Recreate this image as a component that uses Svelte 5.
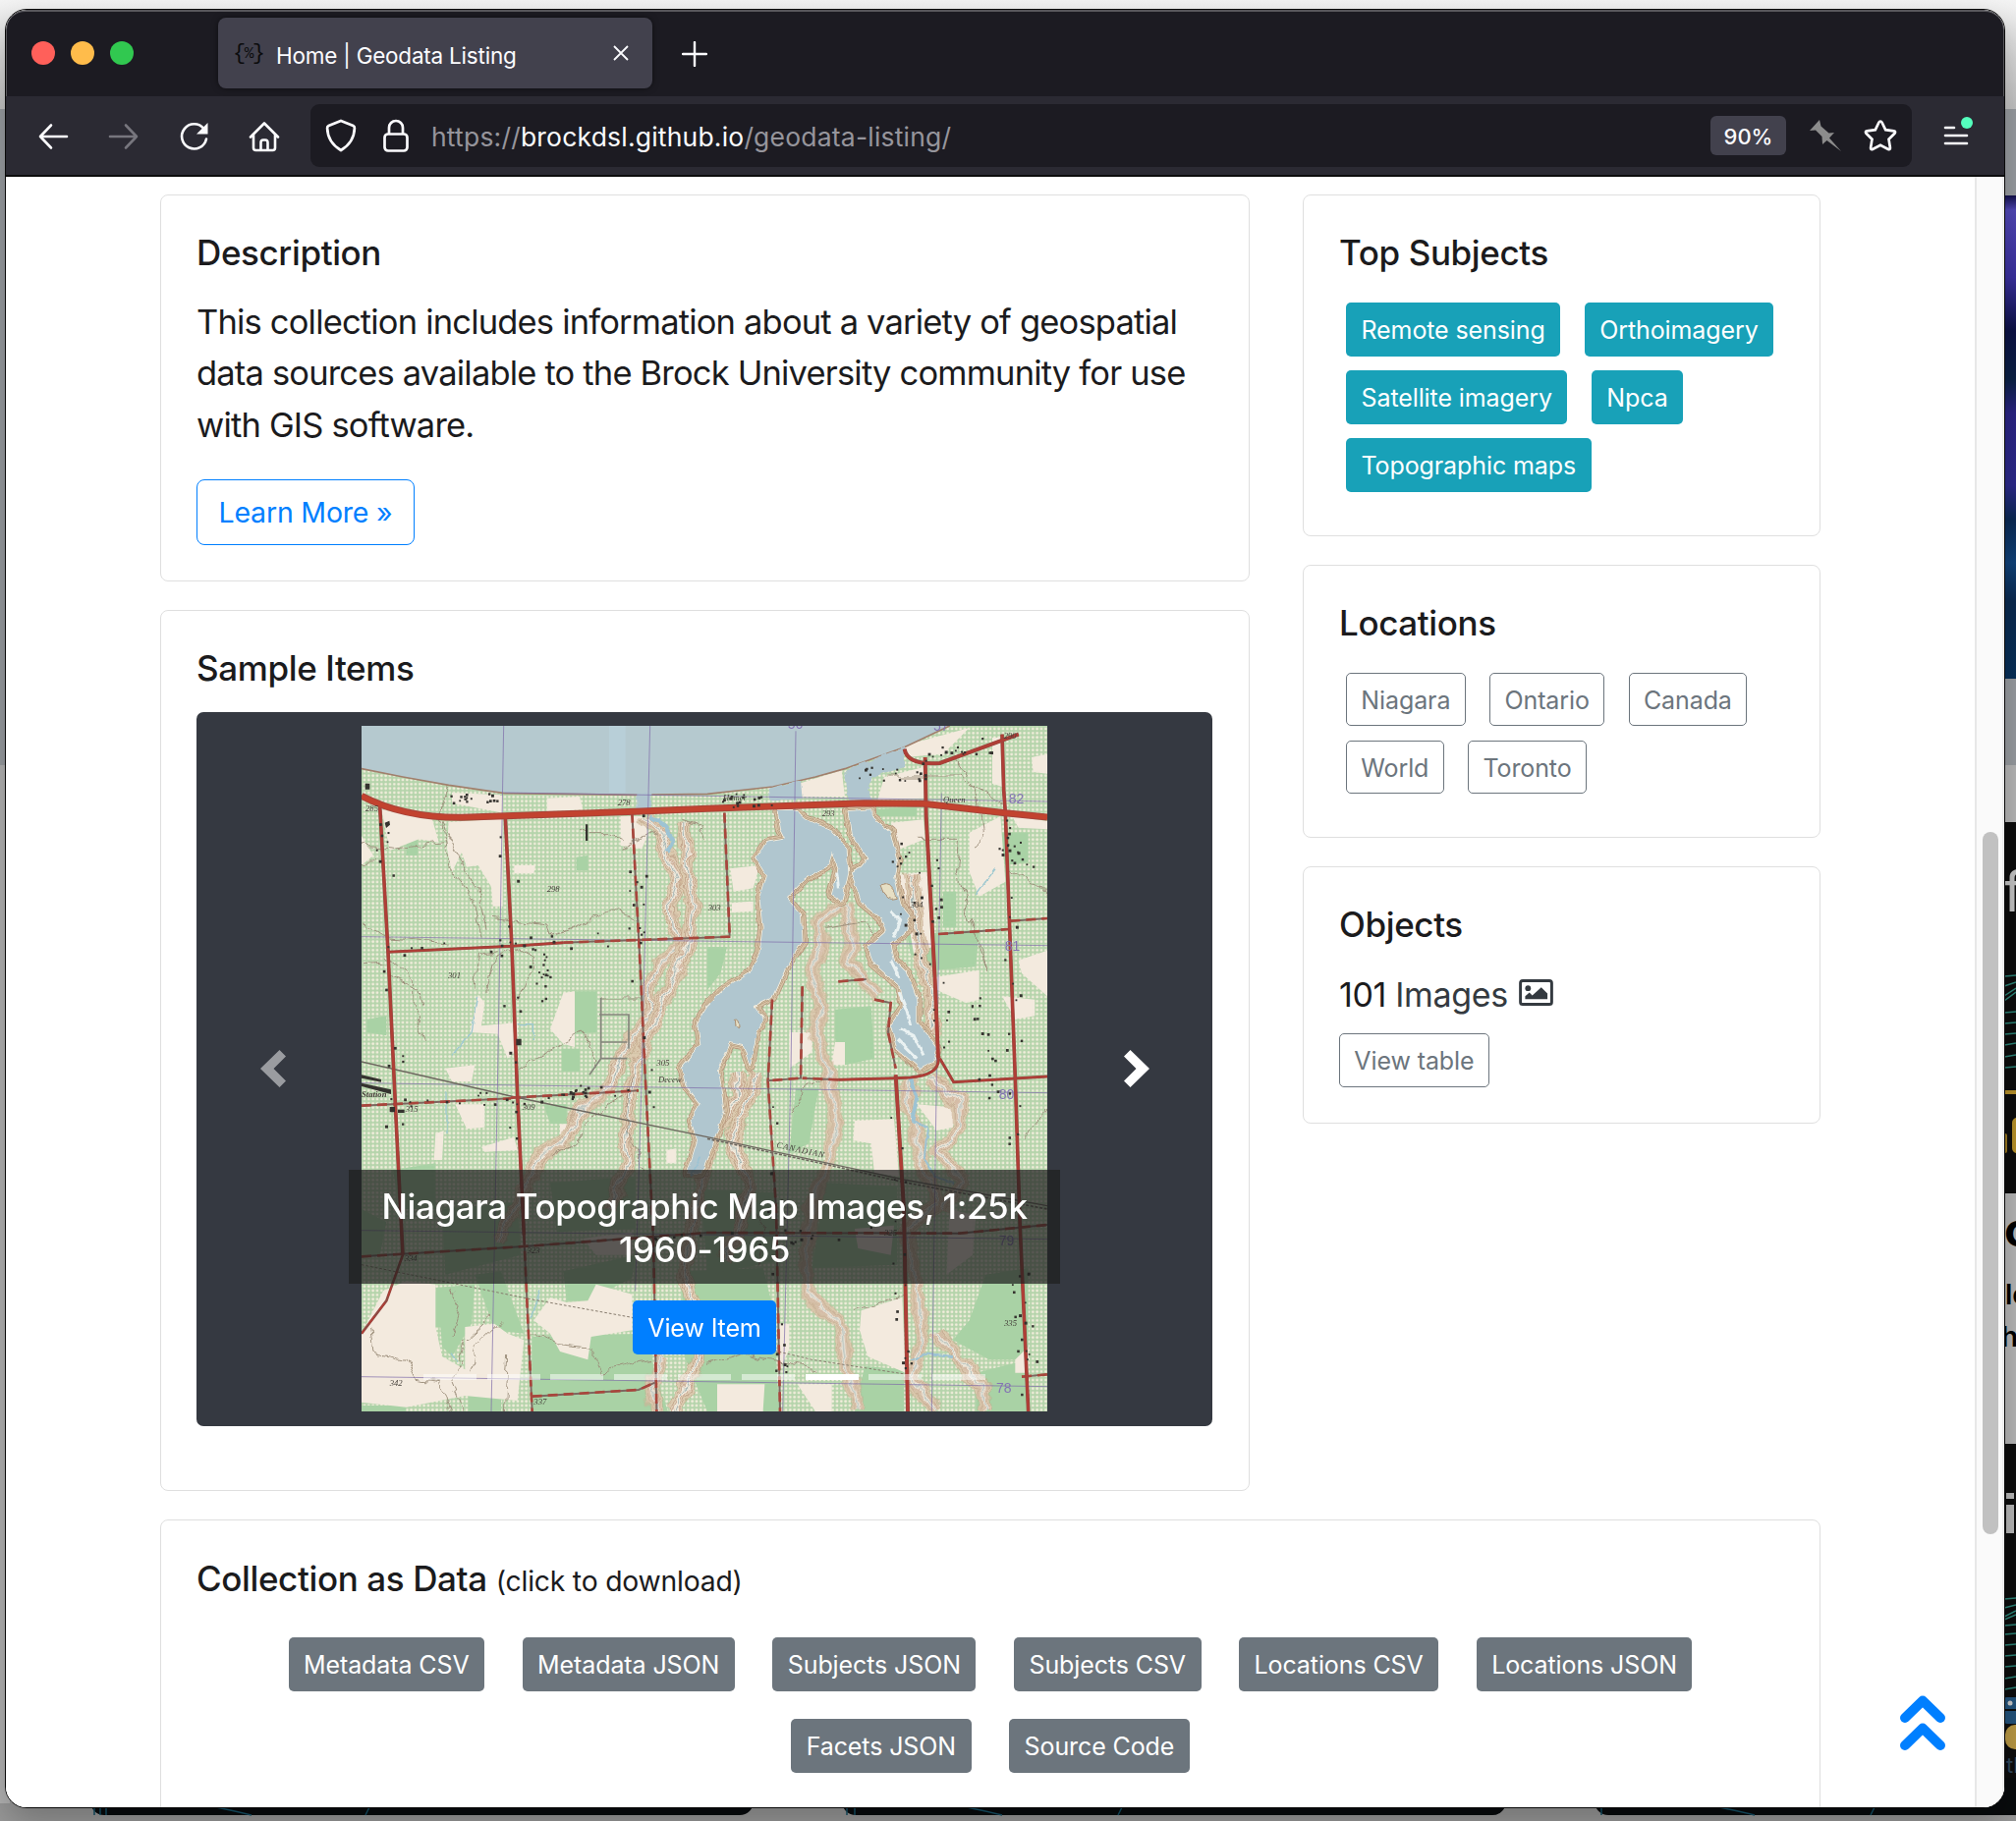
<script>
  const subjects = ['Remote sensing', 'Orthoimagery', 'Satellite imagery', 'Npca', 'Topographic maps'];
  const locations = ['Niagara', 'Ontario', 'Canada', 'World', 'Toronto'];
  const downloads = [
    'Metadata CSV', 'Metadata JSON', 'Subjects JSON', 'Subjects CSV',
    'Locations CSV', 'Locations JSON', 'Facets JSON', 'Source Code'
  ];
  const slides = [0, 1, 2, 3, 4, 5, 6, 7, 8];
  const activeSlide = 6;

  // Roads of the topographic sheet, drawn in map units (3 per pixel).
  const roads = [
    { d: 'M80 270 L105 715 L130 1240 L150 1640', w: 11 },
    { d: 'M463 305 L483 700 L500 1150 L520 1580', w: 11 },
    { d: 'M105 715 L483 697 L640 686', w: 9 },
    { d: 'M150 1640 L100 1780 L24 1880', w: 8, dash: '30 22' },
    { d: 'M1745 120 L1748 300 L1775 800 L1785 1040', w: 12 },
    { d: 'M1655 1090 L1680 1500 L1692 2118', w: 12 },
    { d: 'M1790 1040 L1832 1112 L2118 1095', w: 9 },
    { d: 'M1785 1040 Q1790 1090 1700 1098 L1655 1100 L1480 1105', w: 9 },
    { d: 'M1980 50 L1985 220 L1990 290 L2020 1100 L2035 1560 L2060 2118', w: 11 },
    { d: 'M1682 95 Q1690 145 1790 138 L2030 50', w: 12 }
  ];
  const brokenRoads = [
    'M640 686 L870 678 L1150 668', 'M850 290 L875 760 L890 1090 L915 1590 L925 2118',
    'M520 1580 L530 1800 L545 2118', 'M24 1184 L480 1162', 'M480 1160 L870 1138',
    'M24 1645 L520 1614 L1080 1572 L1850 1574 L2118 1548', 'M545 2072 L870 2052 L920 2030',
    'M1132 290 L1148 665', 'M1785 660 L2000 645', 'M2005 620 L2118 612',
    'M1278 860 L1265 1110 L1290 1500 L1302 2118', 'M1370 820 L1365 1100 L1265 1108',
    'M1480 1105 L1370 1100', 'M1480 805 L1565 798', 'M2040 2012 L2118 2005', 'M1590 860 L1640 870 L1632 960 L1655 1070'
  ];

  const creeks = [
    'M895 300 L935 350 L960 430 L990 500 L970 560 L975 640 L1010 700 L930 755 L900 830 L905 900 L860 970 L810 1040 L790 1120 L700 1190 L640 1290 L570 1340 L540 1400 L440 1600',
    'M1010 320 L1015 400 L1020 490 L1035 570 L1020 680 L1000 750 L960 830 L900 970 L860 1060 L850 1150 L830 1280 L840 1360 L780 1500',
    'M1480 570 L1420 620 L1430 700 L1400 790 L1430 880 L1410 960 L1440 1060 L1470 1200 L1460 1340 L1400 1480 L1380 1650 L1390 1760 L1490 1860 L1500 1960 L1540 2118',
    'M1500 570 L1520 640 L1510 740 L1560 800 L1600 850',
    'M1230 1085 L1200 1180 L1160 1260 L1170 1330 L1210 1430 L1180 1560 L1130 1650',
    'M1170 1085 L1175 1160 L1100 1260 L1070 1400 L1030 1560 L1010 1700 L1060 1850 L1050 1960 L980 2118',
    'M940 1950 L910 2040 L925 2118',
    'M1700 1100 L1690 1180 L1720 1270 L1740 1380 L1790 1480 L1690 1560 L1720 1750 L1740 1900 L1700 2010 L1780 2118',
    'M1760 1100 L1850 1170 L1850 1260 L1780 1320 L1860 1420 L1800 1500',
    'M1700 480 L1720 640 L1740 760 L1760 850 L1770 960',
    'M1780 1880 L1850 1960 L1920 2040 L1930 2118'
  ];

  const thinLines = [
    'M24 620 L90 670 L290 690', 'M420 610 L590 630 L600 660 L660 640 L780 590 L880 620', 'M105 730 L180 790 L185 900 L220 990',
    'M365 830 L380 720 L440 710', 'M410 830 L430 730 L490 700', 'M490 700 L555 740 L525 800 L500 870',
    'M110 790 L200 830 L210 880', 'M290 205 L260 300 L320 420 L380 520 L405 650', 'M270 330 L300 460 L365 550 L390 670',
    'M690 350 L780 350 L830 380', 'M820 400 L920 350', 'M1080 370 L1060 330 L1000 310', 'M1720 370 L1850 370 L1840 480 L1880 600 L1930 770 L1900 700',
    'M1840 130 L1900 220 L1920 360 L1900 400', 'M2000 470 L2080 500 L2118 545', 'M755 855 L870 855',
    'M50 1860 L60 1940 L160 1960 L190 2020 L260 2030 L290 2118', 'M550 1880 L620 1910 L720 1920 L760 2000 L900 1960', 'M300 1740 L330 1790 L300 1890',
    'M1080 1975 L1200 1940 L1420 1990', 'M1530 1805 L1680 1765', 'M24 390 L130 400 L270 380', 'M24 440 L90 435 M24 755 L100 750',
    'M500 1070 L700 960 L750 1060', 'M470 1940 L460 2118', 'M1630 180 L1850 180 L1990 260', 'M2050 1280 L2118 1200',
    'M850 1090 L830 1250 L890 1380', 'M330 1960 L300 2020 L340 2118 M420 1830 L340 1900 L320 1960 M450 1840 L370 1920 L350 2000',
    'M600 1340 L680 1290 L740 1200 L830 1150', 'M1340 1200 L1380 1120 L1440 1100', 'M1450 640 L1560 620 L1610 680', 'M1200 1480 L1260 1560 L1240 1680'
  ];

  const solidGreens = [
    '675,835 742,835 742,960 675,965', '160,340 195,330 195,420 160,420', '680,425 715,420 715,465 680,465', '40,920 100,910 100,970 40,960',
    '635,1010 690,1010 690,1080 635,1080', '1470,890 1580,880 1590,1040 1500,1060 1470,980', '1690,660 1910,650 1900,760 1770,770 1700,720',
    '1080,700 1140,700 1120,780 1080,830', '250,1740 370,1730 360,1850 300,1950 270,1920 265,1860 245,1860', '24,1500 100,1540 80,1640 24,1640',
    '270,1500 500,1480 510,1640 280,1700', '545,1890 900,1880 920,2010 960,2118 545,2118', '640,1690 860,1640 850,1710 715,1780 650,1780',
    '370,1700 450,1690 520,1880 430,1870', '1000,1690 1250,1680 1280,1800 1300,2118 1080,2118 1010,1950', '1060,1440 1290,1450 1290,1660 1080,1700',
    '1440,1420 1660,1430 1660,1670 1400,1680', '1930,1700 2060,1680 2060,1960 1940,1960 1830,1900 1880,1840', '1350,1130 1420,1130 1390,1300 1330,1330',
    '1560,1980 1680,1990 1680,2118 1530,2118', '1900,2000 2060,1960 2060,2118 1900,2118', '24,2100 160,2100 160,2118 24,2118',
    '1960,350 2060,350 2060,440 1990,450', '1800,530 1840,530 1840,640 1800,640', '350,2060 450,2060 450,2118 350,2118', '580,1180 650,1180 650,1240 600,1240',
    '1590,280 1720,270 1720,300 1600,300', '120,1380 250,1360 250,1500 140,1500', '600,1420 860,1400 860,1560 620,1570'
  ];

  const fields = [
    '290,318 455,308 455,575 425,575 420,515 380,450 345,455 330,410 300,470 285,400', '85,280 240,310 260,380 200,370 110,405',
    '640,840 675,835 675,1005 640,995 600,950', '355,960 380,845 400,870 390,940 500,930 500,1010 470,1040 440,965', '300,228 455,235 455,290 300,260',
    '590,245 690,240 700,280 590,285', '815,300 880,300 900,350 880,400 815,390', '490,450 555,450 550,475 490,475', '24,450 60,420 24,360',
    '24,1880 90,1750 160,1720 250,1730 250,1860 270,1950 340,1990 340,1860 430,1850 470,1880 520,1900 500,2085 340,2070 160,2105 24,2090',
    '550,1840 600,1770 650,1785 715,1780 740,1730 850,1760 850,1870 725,1890 715,1960 630,1935 600,1880', '1550,1810 1675,1770 1685,2000 1570,1950 1545,1870',
    '1110,2035 1255,2035 1250,2118 1110,2118', '1355,2035 1460,2035 1460,2118 1410,2118', '1530,1230 1650,1225 1665,1400 1590,1390 1580,1300 1525,1290',
    '310,1180 400,1180 400,1250 345,1255', '390,1310 490,1280 500,1320 400,1325', '250,1270 275,1260 270,1350 245,1350', '1640,320 1740,310 1745,370 1670,400',
    '1650,480 1750,470 1765,700 1710,720 1690,600', '1150,460 1240,450 1220,520 1160,530', '1155,565 1220,560 1220,590 1155,595', '1720,800 1910,770 1910,860 1870,870 1800,840',
    '2070,120 2118,110 2118,170 2075,165', '1880,350 1975,300 1990,500 1910,545 1880,470', '2010,300 2118,315 2118,340 2030,335', '1470,990 1500,990 1500,1060 1460,1060',
    '2030,740 2118,710 2118,850 2040,780', '1330,960 1400,960 1400,1020 1330,1070', '1950,60 1975,60 1980,210 1950,200', '1820,1500 1900,1520 1890,1640 1810,1700',
    '1360,200 1490,160 1500,240 1370,240', '1530,1560 1650,1550 1640,1640 1540,1620', '700,1590 850,1570 850,1640 740,1640', '1720,1180 1840,1190 1830,1250 1780,1260', '2020,1960 2060,1920 2060,2000 2020,2000',
    '1980,850 2080,860 2080,910 2020,920', '630,1240 660,1240 660,1290 630,1290', '955,1320 985,1315 985,1360 955,1360', '1300,1990 1330,1930 1330,1850 1300,1850',
    '1660,90 1880,30 1800,110 1740,115 1690,120', '1660,170 1740,150 1745,245 1600,250 1620,180', '280,1070 370,1060 360,1110 300,1110'
  ];

  // Small buildings scattered along the roads, from a fixed seed.
  function buildings() {
    let seed = 41;
    const next = () => ((seed = (seed * 16807) % 2147483647) / 2147483647);
    const lanes = [
      [85, 300, 130, 1300], [465, 320, 500, 1300], [853, 310, 900, 1350], [1750, 400, 1790, 1000], [1985, 300, 2030, 1300],
      [110, 705, 870, 670], [110, 1175, 870, 1140], [300, 250, 450, 250], [1100, 248, 1250, 248], [1640, 300, 1740, 780],
      [900, 1600, 1600, 1570], [1660, 1150, 1690, 2050], [2040, 1700, 2060, 2050], [1290, 1150, 1300, 2000], [1980, 350, 2060, 470],
      [1560, 160, 1750, 180], [1900, 780, 1950, 1180], [560, 700, 580, 900], [640, 1150, 740, 1130], [1700, 120, 1950, 80]
    ];
    const out = [];
    for (const [x1, y1, x2, y2] of lanes) {
      for (let i = 0; i < 17; i++) {
        const t = next();
        out.push({ x: x1 + (x2 - x1) * t + (next() - 0.5) * 64, y: y1 + (y2 - y1) * t + (next() - 0.5) * 44, s: 5 + next() * 4 });
      }
    }
    return out;
  }
  const dots = buildings();

  const labels = [
    [36, 286, '285'], [590, 530, '298'], [288, 795, '301'], [925, 1062, '305'], [1430, 300, '293'], [1082, 588, '303'], [1700, 580, '304'],
    [158, 1202, '315'], [515, 1196, '309'], [530, 1634, '323'], [155, 1658, '334'], [110, 2040, '342'], [550, 2096, '337'], [1986, 1858, '335'],
    [1985, 62, '290'], [806, 268, '278'], [1800, 258, 'Queen'], [1128, 252, 'Homer'], [930, 1114, 'Decew'], [1620, 1580, '325']
  ];
  const gridLabels = [[1325, 34, '56'], [1770, 38, '57'], [2000, 262, '82'], [1988, 712, '81'], [1970, 1164, '80'], [1970, 1610, '79'], [1962, 2060, '78']];
</script>

<div class="desktop">
  <svg class="backdrop" viewBox="0 0 2052 1854" aria-hidden="true">
    <defs>
      <linearGradient id="sky" x1="0" x2="0" y1="0" y2="1">
        <stop offset="0" stop-color="#f4f4f4" /><stop offset="1" stop-color="#c4c4c4" />
      </linearGradient>
      <linearGradient id="aurora" x1="0" x2="0" y1="0" y2="1">
        <stop offset="0" stop-color="#12104a" /><stop offset=".03" stop-color="#5148b8" /><stop offset=".17" stop-color="#3a30a0" />
        <stop offset=".28" stop-color="#0c1145" /><stop offset=".38" stop-color="#0b2145" /><stop offset=".45" stop-color="#2a2485" />
        <stop offset=".6" stop-color="#2c2a8c" /><stop offset=".67" stop-color="#0b2a55" /><stop offset=".76" stop-color="#10427a" />
        <stop offset=".84" stop-color="#0a2a50" /><stop offset="1" stop-color="#073059" />
      </linearGradient>
    </defs>
    <rect width="2052" height="1854" fill="#9a9a9a" />
    <rect width="2052" height="111" fill="url(#sky)" />
    <rect y="111" width="2052" height="668" fill="#999da1" />
    <rect x="0" y="779" width="10" height="1075" fill="#b4b4b4" />
    <rect x="2036" y="199" width="16" height="492" fill="url(#aurora)" />
    <rect x="2036" y="779" width="16" height="58" fill="#b8b8b8" />
    <rect x="2036" y="837" width="16" height="378" fill="#0d0d0d" />
    <g stroke="#2c8578" stroke-width="1.5">
      <path d="M2040 994l12-1M2040 1004l12-4M2040 1014l12-8M2040 1019l12-9M2040 1031l12-1M2040 1042l12-1M2040 1053l12-1M2040 1064l12-2M2040 1076l12-2M2040 1087l12-1" />
    </g>
    <rect x="2036" y="1110" width="16" height="4" fill="#b8922b" />
    <rect x="2038" y="1154" width="5" height="20" rx="2" fill="#9a7820" />
    <rect x="2048" y="1138" width="12" height="36" rx="5" fill="#b8922b" />
    <rect x="2036" y="1215" width="16" height="255" fill="#b8b8b8" />
    <rect x="2036" y="1470" width="16" height="378" fill="#0d0d0d" />
    <rect x="2042" y="1520" width="8" height="6" fill="#b9b9b9" />
    <rect x="2042" y="1532" width="8" height="29" fill="#b9b9b9" />
    <path d="M2040 1628l12-1M2040 1637l12-3M2040 1646l12-6M2040 1649l12-5M2040 1655l12-1M2040 1664l12-1M2040 1675l12-1M2040 1686l12-1M2040 1697l12-1M2040 1709l12-2M2040 1720l12-2" stroke="#2c8578" stroke-width="1.5" />
    <rect x="2038" y="1728" width="24" height="27" rx="5" fill="#23537c" />
    <rect x="2038" y="1740" width="14" height="2" fill="#0d0d0d" />
    <circle cx="2046" cy="1734" r="2.5" fill="#ccc" />
    <rect x="2041" y="1756" width="24" height="25" rx="10" fill="#bb9a45" />
    <rect x="0" y="1836" width="2052" height="18" fill="#9a9a9a" />
    <g fill="#080b0d">
      <rect x="92" y="1810" width="675" height="38" rx="14" />
      <rect x="857" y="1810" width="676" height="38" rx="14" />
      <rect x="1623" y="1810" width="450" height="38" rx="14" />
    </g>
    <path d="M96 1840v8M102 1840v8M108 1840v8M220 1840q20 4 36 8M376 1840l-4 8M862 1840v8M870 1840v8M984 1840q20 4 36 8M1142 1840l-4 8M1630 1840v8M1750 1840q20 4 36 8M1908 1840l-4 8" stroke="#155066" stroke-width="1.5" fill="none" />
    <g class="peek">
      <text x="2039" y="928" fill="#c4c4c4" font-size="56">f</text>
      <text x="2040" y="1269" fill="#000" font-size="48" font-weight="700">c</text>
      <text x="2041" y="1328" fill="#000" font-size="28" font-weight="600">lo</text>
      <text x="2037" y="1371" fill="#000" font-size="28" font-weight="600">h</text>
      <text x="2042" y="1805" fill="#30475c" font-size="22">th</text>
    </g>
  </svg>

  <div class="window">
    <div class="tabbar">
      <div class="lights"><i class="red"></i><i class="amber"></i><i class="green"></i></div>
      <div class="tab">
        <span class="favicon">&#123;<em>%</em>&#125;</span>
        <span class="tab-title">Home | Geodata Listing</span>
        <svg class="close" viewBox="0 0 16 16"><path d="M1 1l14 14M15 1L1 15" /></svg>
      </div>
      <svg class="plus" viewBox="0 0 26 26"><path d="M13 1v24M1 13h24" /></svg>
    </div>

    <div class="toolbar">
      <svg class="nav" viewBox="0 0 32 32"><path d="M30 16H3M14 4.500L3 16l11 11.500" /></svg>
      <svg class="nav dim" viewBox="0 0 32 32"><path d="M2 16h27M18 4.500L29 16 18 27.500" /></svg>
      <svg class="nav" viewBox="0 0 32 32"><path d="M28 18.500A12.600 12.600 0 1 1 25.500 8" /><path class="solid" d="M29.500 2v11.500h-11.500z" /></svg>
      <svg class="nav" viewBox="0 0 32 32"><path d="M2 16.500L16 2.500l14 14M5 14v13.500q0 2.500 2.500 2.500h17q2.500 0 2.500-2.500V14M12.500 30v-8q0-2.500 2.500-2.500h2q2.500 0 2.500 2.500v8" /></svg>
      <div class="urlbar">
        <svg class="shield" viewBox="0 0 32 34"><path d="M16 2L28.500 7q1.500.7 1.400 2.300Q29.500 24 16 32 2.500 24 2.100 9.300 2 7.700 3.500 7z" /></svg>
        <svg class="lock" viewBox="0 0 26 34"><rect x="1.500" y="15.500" width="23" height="17" rx="3.500" /><path d="M6 15.500V9a7 7 0 0 1 14 0v6.500" /></svg>
        <span class="url">https://<b>brockdsl.github.io</b>/geodata-listing/</span>
        <span class="zoom">90%</span>
        <svg class="pin" viewBox="0 0 32 32"><path d="M10 0l1.500 6.500 8 7 5.500-.5-5 5.500L32 32 17.500 21 13 25l-.5-8L6 10.500 0 11z" /></svg>
        <svg class="star" viewBox="0 0 34 34"><path d="M17 2.500q1 0 1.500 1l3.700 7.700 8.400 1.200q2.400.5.900 2.400l-6 6 1.400 8.600q.2 2.300-1.900 1.500L17 26.700l-8 4.200q-2.100.8-1.900-1.500l1.400-8.600-6-6q-1.500-1.900.9-2.400l8.400-1.200 3.700-7.700q.5-1 1.500-1z" /></svg>
      </div>
      <svg class="menu" viewBox="0 0 32 36"><path d="M2 13h9M2 21h22M2 29h22" /><circle cx="24" cy="8" r="6" /></svg>
    </div>

    <div class="viewport">
      <main>
        <div class="columns">
          <div class="stack">
            <section class="card">
              <h5>Description</h5>
              <p class="lead">This collection includes information about a variety of geospatial data sources available to the Brock University community for use with GIS software.</p>
              <a class="learn">Learn More »</a>
            </section>
            <section class="card samples">
              <h5>Sample Items</h5>
              <div class="carousel">
                <svg class="map" viewBox="24 24 2094 2094">
                  <defs>
                    <pattern id="orchard" width="13" height="13" patternUnits="userSpaceOnUse">
                      <rect width="13" height="13" fill="#b5d4ab" /><rect x="3" y="3" width="8" height="8" rx="3" fill="#f1eddb" />
                    </pattern>
                    <filter id="wobble" x="-5%" y="-5%" width="110%" height="110%">
                      <feTurbulence type="fractalNoise" baseFrequency=".018" numOctaves="3" seed="7" />
                      <feDisplacementMap in="SourceGraphic" scale="42" xChannelSelector="R" yChannelSelector="G" />
                    </filter>
                    <filter id="ripple"><feTurbulence type="fractalNoise" baseFrequency=".03" numOctaves="2" seed="3" /><feDisplacementMap in="SourceGraphic" scale="16" xChannelSelector="R" yChannelSelector="G" /></filter>
                  </defs>
                  <rect x="24" y="24" width="2094" height="2094" fill="#f4ebdc" />
                  <rect x="24" y="24" width="2094" height="2094" fill="url(#orchard)" />
                  <g fill="#a9d2a5">{#each solidGreens as p}<polygon points={p} />{/each}</g>
                  <g fill="#f3eade">{#each fields as p}<polygon points={p} />{/each}</g>

                  <g filter="url(#wobble)" fill="none" stroke-linejoin="round">
                    {#each creeks as d}
                      <path {d} stroke="#c0a183" stroke-width="46" opacity=".7" />
                      <path {d} stroke="#dccbb0" stroke-width="41" />
                      <path {d} stroke="#b99a80" stroke-width="29" />
                      <path {d} stroke="#e0cfb6" stroke-width="25" />
                      <path {d} stroke="#c39d86" stroke-width="17" />
                      <path {d} stroke="#efe8da" stroke-width="13" />
                      <path {d} stroke="#a3b5b4" stroke-width="3" />
                    {/each}
                  </g>
                  <g fill="none" stroke="#9a8c78" stroke-width="2.800" filter="url(#wobble)">{#each thinLines as d}<path {d} />{/each}</g>

                  <path d="M24 24V155L150 180 290 205 460 230 860 235 1080 232 1280 210 1410 180 1500 155 1680 90 1820 24Z" fill="#b5c9cf" />
                  <path d="M780 24h50v205h-50z" fill="#b9d2dc" opacity=".7" />
                  <path d="M24 155L150 180 290 205 460 230 860 235 1080 232 1280 210 1410 180 1500 155 1680 90 1820 24" fill="none" stroke="#a17f6c" stroke-width="5" />
                  <g filter="url(#ripple)" stroke-linejoin="round">
                    {#each [{ s: '#b3947a', w: 32 }, { s: '#d8c4a6', w: 27 }, { s: '#b3947a', w: 18 }, { s: '#d8c4a6', w: 15 }, { s: '#a18c72', w: 9 }, { s: '#f3ecdc', w: 6 }] as edge}
                      <g fill={edge.s} stroke={edge.s} stroke-width={edge.w}>
                        <path d="M1295 285L1305 340 1320 370 1260 380 1230 430 1260 480 1240 550 1250 640 1240 720 1210 780 1130 830 1080 880 1050 930 1060 1000 1000 1070 1015 1120 1060 1180 1030 1230 1050 1290 1020 1390 1060 1390 1090 1320 1130 1200 1120 1130 1110 1080 1150 990 1190 1000 1210 1060 1230 960 1250 920 1220 880 1280 850 1320 760 1370 680 1365 600 1320 550 1380 490 1450 450 1460 410 1480 460 1460 540 1490 560 1510 470 1505 400 1450 340 1380 310 1350 285Z" />
                        <path d="M1510 285L1520 350 1570 430 1550 455 1520 470 1550 560 1610 610 1625 650 1570 700 1590 750 1670 820 1680 880 1640 940 1660 1010 1730 1070 1770 1050 1780 1010 1720 930 1720 860 1690 780 1650 740 1640 690 1680 660 1700 610 1670 570 1650 480 1660 430 1640 350 1580 300 1580 280Z" />
                      </g>
                    {/each}
                    <g fill="#b0c6cf">
                      <path d="M1295 285L1305 340 1320 370 1260 380 1230 430 1260 480 1240 550 1250 640 1240 720 1210 780 1130 830 1080 880 1050 930 1060 1000 1000 1070 1015 1120 1060 1180 1030 1230 1050 1290 1020 1390 1060 1390 1090 1320 1130 1200 1120 1130 1110 1080 1150 990 1190 1000 1210 1060 1230 960 1250 920 1220 880 1280 850 1320 760 1370 680 1365 600 1320 550 1380 490 1450 450 1460 410 1480 460 1460 540 1490 560 1510 470 1505 400 1450 340 1380 310 1350 285Z" />
                      <path d="M1510 285L1520 350 1570 430 1550 455 1520 470 1550 560 1610 610 1625 650 1570 700 1590 750 1670 820 1680 880 1640 940 1660 1010 1730 1070 1770 1050 1780 1010 1720 930 1720 860 1690 780 1650 740 1640 690 1680 660 1700 610 1670 570 1650 480 1660 430 1640 350 1580 300 1580 280Z" />
                      <path d="M1270 250L1265 215 1365 190 1370 250ZM1510 250L1500 160 1680 90V150L1580 180 1570 220 1585 255ZM865 230h45v50h-45z" />
                    </g>
                    <path d="M1605 510q40-18 55 40-40 15-55-40zM1165 925q14-5 14 20-12 8-14-20z" fill="#e7dfc4" stroke="#a88e72" stroke-width="3" />
                    <g fill="none" stroke="#eaf2f2" stroke-width="9"><path d="M1640 590l30 30-20 50M1640 740l25 50-10-30M1670 950l40 20 30 60M1690 900l10 40M1475 470l5 50M1665 840l25 60M1660 980l60 60" /></g>
                    <g fill="none" stroke="#9dc3d3" stroke-width="12"><path d="M905 300l50 30 20 50-20 30M1700 1100l20 60-15 70" /></g>
                    <g fill="none" stroke="#9dc3d3" stroke-width="6"><path d="M1705 1230l50 20-10 100 30 50 60 20M1700 1960l50-20 80 10M1060 1340l-30 60" /></g>
                    <g fill="none" stroke="#9dc8d0" stroke-width="4"><path d="M285 1140v130M380 850l-20 110-60 70M500 935h50v50M1960 460l-60 80M570 1750l-30 80M300 1940l20 30" /></g>
                  </g>
                  <path d="M755 855V1040M750 906H840V1010M755 1040H835M755 990H835M720 1090L755 1040" fill="none" stroke="#85857c" stroke-width="5" />

                  <g stroke="#7d6aa8" stroke-width="2.800" opacity=".75" fill="none">
                    <path d="M458 24L440 1080 420 2118M905 24L880 1080 860 1750M1350 40L1335 1080 1310 2118M1795 230L1780 1080 1765 2118M24 1115L2118 1145M24 2012L2118 2042M24 668L2118 695M460 228L2118 255M24 1565L2118 1592" />
                  </g>
                  <path d="M24 1050L480 1155 1080 1280 1680 1410 2118 1490" fill="none" stroke="#6d675f" stroke-width="4" />
                  <path d="M1080 1285L1450 1365 1680 1418 2118 1500" fill="none" stroke="#6d675f" stroke-width="5" stroke-dasharray="9 5" />
                  <path d="M24 1670L540 1775 900 1840 1400 1960 1690 2005" fill="none" stroke="#857a6c" stroke-width="3" stroke-dasharray="8 6" />

                  <g fill="none" stroke="#7d6760">
                    {#each brokenRoads as d}
                      <path {d} stroke-width="6" />
                      <path {d} stroke="#a8463c" stroke-width="8" stroke-dasharray="30 18" />
                    {/each}
                    {#each roads as r}
                      <path d={r.d} stroke="#8f4a43" stroke-width={r.w} />
                      <path d={r.d} stroke="#b03e36" stroke-width={r.w - 3} stroke-dasharray={r.dash} />
                    {/each}
                    <path d="M24 238Q150 305 330 304L860 286 1080 277 1560 260 1740 262 1990 290 2118 303" stroke="#a8443a" stroke-width="21" />
                    <path d="M24 238Q150 305 330 304L860 286 1080 277 1560 260 1740 262 1990 290 2118 303" stroke="#c2432f" stroke-width="15" />
                  </g>

                  <g fill="#35332f">
                    {#each dots as b}<rect x={b.x} y={b.y} width={b.s} height={b.s} />{/each}
                    <path d="M35 200h14v18h-14zM708 325h7v50h-7zM95 320l14-6 2 12-12 10zM24 1115l90 20v14l-90-24zM24 1090l60 14v8l-60-12zM496 980h16v20h-16zM110 1188h16v16h-16zM135 1196h20v10h-20z" />
                  </g>
                  <g class="spot">
                    {#each labels as [x, y, t]}<text {x} {y}>{t}</text>{/each}
                    <text x="24" y="1158" font-weight="700">Station</text>
                    <text x="1290" y="1312" transform="rotate(12 1290 1312)" letter-spacing="3">CANADIAN</text>
                  </g>
                  <g class="grid-no">{#each gridLabels as [x, y, t]}<text {x} {y}>{t}</text>{/each}</g>
                </svg>

                <svg class="arrow prev" viewBox="0 0 26 38"><path d="M19.500 0L26 6.500 13.500 19 26 31.500 19.500 38 0 19z" /></svg>
                <svg class="arrow next" viewBox="0 0 26 38"><path d="M6.500 0L0 6.500 12.500 19 0 31.500 6.500 38 26 19z" /></svg>
                <div class="caption">
                  <h5>Niagara Topographic Map Images, 1:25k<br />1960-1965</h5>
                  <a class="view">View Item</a>
                </div>
                <div class="indicators">
                  {#each slides as s}<i class:active={s === activeSlide}></i>{/each}
                </div>
              </div>
            </section>
          </div>

          <aside class="stack">
            <section class="card side">
              <h5>Top Subjects</h5>
              <div class="tags">{#each subjects as s}<a class="tag info">{s}</a>{/each}</div>
            </section>
            <section class="card side">
              <h5>Locations</h5>
              <div class="tags">{#each locations as l}<a class="tag outline">{l}</a>{/each}</div>
            </section>
            <section class="card objects">
              <h5>Objects</h5>
              <div class="count">
                <span>101 <em>Images</em></span>
                <svg viewBox="0 0 36 28"><rect x="1.500" y="1.500" width="33" height="25" rx="2.500" /><circle cx="9.500" cy="9.500" r="3" /><path d="M6.500 21v-3l4.500-4 3 3 9.500-8.500 6.500 6.500v6z" /></svg>
              </div>
              <a class="tag outline">View table</a>
            </section>
          </aside>
        </div>

        <section class="card data">
          <h5>Collection as Data <small>(click to download)</small></h5>
          <div class="downloads">{#each downloads as d}<a class="tag grey">{d}</a>{/each}</div>
        </section>
      </main>
      <div class="scrollbar"><i></i></div>
      <svg class="to-top" viewBox="0 0 46 58"><path d="M5 24L23 6.500l18 17.500M5 52l18-17.500 18 17.500" /></svg>
    </div>
  </div>
</div>

<style>
  :global(body) { overflow: hidden; }
  * { box-sizing: border-box; }
  .desktop {
    position: relative; width: 2052px; height: 1854px; overflow: hidden;
    padding: 9px 11px 13px 5px; display: flex;
    font-family: Inter, "Noto Sans", sans-serif; color: #1b1b1d;
  }
  .backdrop { position: absolute; inset: 0; width: 2052px; height: 1854px; }
  .peek { font-family: Inter, sans-serif; }
  .window {
    position: relative; flex: 1; display: flex; flex-direction: column; overflow: hidden;
    border: 1px solid #0a0a0a; border-radius: 22px; background: #fff;
    box-shadow: 0 16px 36px rgba(0, 0, 0, .25);
  }

  .tabbar {
    height: 88px; flex: none; display: flex; align-items: center; background: #1c1b22;
    border: 2px solid #57565b; border-width: 2px 1px 0; border-radius: 20px 20px 0 0;
    padding-left: 25px; padding-bottom: 2px;
  }
  .lights { display: flex; gap: 16px; width: 190px; }
  .lights i { width: 24px; height: 24px; border-radius: 50%; }
  .red { background: #ff605a; }
  .amber { background: #ffbc4b; }
  .green { background: #31c850; }
  .tab {
    width: 442px; height: 72px; border-radius: 8px; background: #42414d; color: #fbfbfe;
    display: flex; align-items: center; padding: 0 24px 0 15px; box-shadow: 0 0 6px rgba(0, 0, 0, .5);
  }
  .favicon { font: 22px "Liberation Mono", monospace; letter-spacing: -1.500px; width: 44px; color: #0c0c0e; white-space: nowrap; }
  .favicon em { font-size: 16px; font-style: normal; vertical-align: 1px; }
  .tab-title { font-size: 22.500px; letter-spacing: -.22px; flex: 1; padding-top: 5px; white-space: nowrap; }
  svg { display: block; }
  .close { width: 16px; height: 16px; stroke: #fbfbfe; stroke-width: 1.800; fill: none; }
  .plus { width: 26px; height: 26px; margin: 2px 0 0 30px; stroke: #fbfbfe; stroke-width: 2.400; fill: none; stroke-linecap: round; }

  .toolbar {
    height: 82px; flex: none; display: flex; align-items: center; background: #2b2a33;
    border-bottom: 2px solid #0c0c0d; padding: 2px 26px 0 32px;
  }
  .nav { width: 32px; height: 32px; margin-right: 40px; fill: none; stroke: #fbfbfe; stroke-width: 2.600; stroke-linecap: round; stroke-linejoin: round; }
  .nav:nth-of-type(4) { margin: 0 31px 0 -1px; }
  .dim { stroke: #77767e; }
  .nav .solid { fill: #fbfbfe; stroke: none; }
  .urlbar { flex: none; width: 1630px; height: 64px; border-radius: 9px; background: #1c1b22; display: flex; align-items: center; margin-top: -2px; }
  .shield { width: 32px; height: 34px; margin-left: 15px; fill: none; stroke: #fbfbfe; stroke-width: 2.700; }
  .lock { width: 26px; height: 34px; margin: 0 23px 0 27px; fill: none; stroke: #fbfbfe; stroke-width: 2.700; }
  .url { flex: 1; font-size: 26.500px; letter-spacing: .2px; color: #96959c; white-space: nowrap; padding-top: 2px; }
  .url b { font-weight: 400; color: #fbfbfe; }
  .zoom { width: 77px; height: 40px; border-radius: 6px; background: #42414d; color: #fbfbfe; font-size: 22px; font-weight: 500; line-height: 42px; text-align: center; }
  .pin { width: 32px; height: 32px; margin: 0 23px 0 24px; fill: #8c8c8c; }
  .star { width: 34px; height: 34px; margin-right: 15px; fill: none; stroke: #fbfbfe; stroke-width: 2.700; }
  .menu { width: 32px; height: 36px; margin: -8px 0 0 32px; fill: none; stroke: #fbfbfe; stroke-width: 2.600; stroke-linecap: round; }
  .menu circle { fill: #54ffbd; stroke: none; }

  .viewport { flex: 1; min-height: 0; display: flex; position: relative; background: #fff; }
  main { flex: 1; padding: 18px 157px 0 157px; }
  .scrollbar { width: 30px; border-left: 2px solid #e7e7e7; border-right: 2px solid #ececec; background: #fafafa; padding: 667px 0 0 6px; }
  .scrollbar i { display: block; width: 16px; height: 715px; border-radius: 8px; background: #c1c1c1; }
  .to-top { position: absolute; right: 60px; bottom: 57px; width: 46px; height: 58px; fill: none; stroke: #007fff; stroke-width: 10; stroke-linejoin: round; stroke-linecap: round; }

  .columns { display: grid; grid-template-columns: 1109px 527px; justify-content: space-between; align-items: start; }
  .stack { display: flex; flex-direction: column; gap: 29px; }
  .card { border: 1px solid #dfdfdf; border-radius: 8px; padding: 37px 36px 36px; background: #fff; }
  h5 { margin: 0 0 23px; font-size: 35px; line-height: 43px; font-weight: 500; letter-spacing: -.38px; white-space: nowrap; }
  .lead { margin: 0 0 29px; font-size: 34.500px; line-height: 52.400px; letter-spacing: -.82px; }
  .learn {
    display: block; width: 222px; height: 67px; border: 1px solid #007fff; border-radius: 8px; color: #007fff;
    font-size: 28.500px; line-height: 66px; text-align: center; letter-spacing: -.2px; white-space: nowrap;
  }
  .samples { padding-bottom: 65px; }

  .carousel { position: relative; height: 727px; border-radius: 7px; background: #353941; padding: 14px 0 0 168px; margin-right: 1px; }
  .map { width: 698px; height: 698px; }
  .spot { font: italic 26px "Liberation Serif", serif; fill: #45403a; }
  .grid-no { font: 42px "Liberation Sans", sans-serif; fill: #8474b4; }
  .arrow { position: absolute; top: 344px; width: 26px; height: 38px; fill: #fff; }
  .prev { left: 65px; opacity: .5; }
  .next { left: 944px; }
  .caption { position: absolute; left: 155px; top: 466px; width: 724px; display: flex; flex-direction: column; align-items: center; gap: 17px; color: #fff; }
  .caption h5 { width: 724px; height: 116px; margin: 0; padding-top: 15px; background: rgba(30, 30, 30, .72); text-align: center; line-height: 44px; }
  .view { width: 146px; height: 55px; border-radius: 5px; background: #007fff; font-size: 25.200px; line-height: 56px; text-align: center; letter-spacing: -.2px; }
  .indicators { position: absolute; left: 0; right: 0; top: 674px; display: flex; justify-content: center; gap: 10.800px; }
  .indicators i { width: 54px; height: 6px; background: #fff; opacity: .5; }
  .indicators .active { opacity: 1; }

  .side { padding-bottom: 44px; }
  .tags { display: flex; flex-wrap: wrap; gap: 14.500px 24.500px; padding: 6px 0 0 7px; margin-right: -20px; }
  .tag { display: inline-block; height: 55px; border-radius: 5px; padding: 0 15.500px; font-size: 25px; line-height: 56px; letter-spacing: -.1px; white-space: nowrap; }
  .tags .tag { height: 54.500px; }
  .info { background: #18a1b8; color: #fff; }
  .outline { border: 1px solid #6c757d; color: #6c757d; line-height: 54px; padding: 0 14.300px; }
  .grey { background: #6c757d; color: #fff; }
  .count { display: flex; align-items: center; gap: 11px; height: 52px; margin-bottom: 14px; font-size: 34px; letter-spacing: -.35px; }
  .count em { font-style: normal; color: #343a40; }
  .count svg { width: 35px; height: 27px; fill: #343a40; margin-top: -3px; }
  .count rect { fill: none; stroke: #343a40; stroke-width: 3; }
  .objects .tag { vertical-align: top; }

  .data { margin-top: 29px; height: 340px; }
  .data h5 { margin-bottom: 35px; padding-top: 1px; }
  small { font-size: 28.300px; font-weight: 400; letter-spacing: -.2px; }
  .downloads { display: flex; flex-wrap: wrap; justify-content: center; gap: 28px 38.500px; padding: 0 60px; }
</style>
